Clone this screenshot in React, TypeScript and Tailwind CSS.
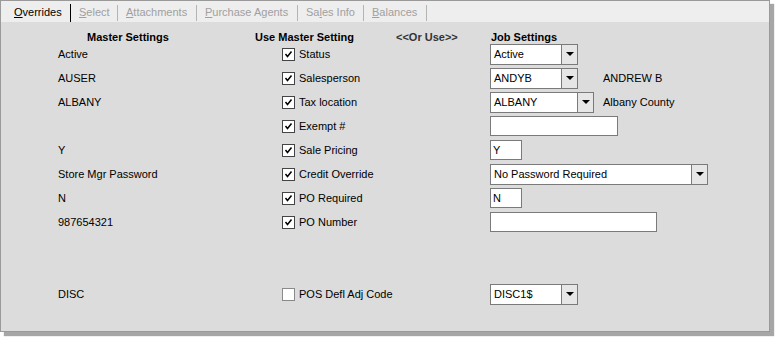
import React from "react";

const Combo: React.FC<{ value: string; width: string }> = ({value, width}) => {
    return (
        <div className={`flex h-[21px] border border-[#7a7a7a] bg-white ${width}`}>
            <div className="flex-1 pl-[3px] leading-[19px] text-black truncate">{value}</div>
            <div className="w-[16px] border-l border-[#7a7a7a] bg-[#e6e6e6] flex items-center justify-center">
                <div className="w-0 h-0 border-l-[4px] border-r-[4px] border-t-[4px] border-l-transparent border-r-transparent border-t-black"></div>
            </div>
        </div>
    );
};

const TextBox: React.FC<{ value?: string; width: string }> = ({value, width}) => {
    return (
        <div className={`h-[20px] border border-[#7a7a7a] bg-white pl-[2px] leading-[18px] text-black ${width}`}>
            {value}
        </div>
    );
};

const Check: React.FC<{ checked: boolean }> = ({checked}) => {
    return (
        <div
            className={`w-[13px] h-[13px] border bg-white flex items-center justify-center ${checked ? "border-[#444444]" : "border-[#8a8a8a]"}`}>
            {checked && (
                <svg width="9" height="9" viewBox="0 0 9 9">
                    <path d="M1.5 4 L3.5 6.5 L7.5 1.5" stroke="#000" strokeWidth="1.5" fill="none"/>
                </svg>
            )}
        </div>
    );
};

type Row = {
    master: string;
    checked: boolean;
    label: string;
    job: React.ReactNode;
    extra?: string;
};

const rows: (Row | null)[] = [
    {master: "Active", checked: true, label: "Status", job: <Combo value="Active" width="w-[88px]"/>},
    {master: "AUSER", checked: true, label: "Salesperson", job: <Combo value="ANDYB" width="w-[88px]"/>, extra: "ANDREW B"},
    {master: "ALBANY", checked: true, label: "Tax location", job: <Combo value="ALBANY" width="w-[104px]"/>, extra: "Albany County"},
    {master: "", checked: true, label: "Exempt #", job: <TextBox width="w-[128px]"/>},
    {master: "Y", checked: true, label: "Sale Pricing", job: <TextBox value="Y" width="w-[32px]"/>},
    {master: "Store Mgr Password", checked: true, label: "Credit Override", job: <Combo value="No Password Required" width="w-[218px]"/>},
    {master: "N", checked: true, label: "PO Required", job: <TextBox value="N" width="w-[32px]"/>},
    {master: "987654321", checked: true, label: "PO Number", job: <TextBox width="w-[167px]"/>},
    null,
    null,
    {master: "DISC", checked: false, label: "POS Defl Adj Code", job: <Combo value="DISC1$" width="w-[88px]"/>},
];

const tabs = [
    {pre: "", key: "O", post: "verrides", w: "w-[65px]", active: true},
    {pre: "", key: "S", post: "elect", w: "w-[47px]", active: false},
    {pre: "", key: "A", post: "ttachments", w: "w-[79px]", active: false},
    {pre: "", key: "P", post: "urchase Agents", w: "w-[101px]", active: false},
    {pre: "Sa", key: "l", post: "es Info", w: "w-[66px]", active: false},
    {pre: "", key: "B", post: "alances", w: "w-[63px]", active: false},
];

const App: React.FC = () => {
    return (
        <div className="w-[777px] h-[338px] bg-white text-[11px] text-black"
             style={{fontFamily: '"Liberation Sans", Arial, sans-serif'}}>
            <div className="w-[770px] h-[332px] border border-[#9a9a9a] shadow-[4px_4px_1px_rgba(0,0,0,0.35)] flex flex-col bg-[#dcdcdc]">
                {/* Tabs */}
                <div className="h-[21px] bg-[#eeeeee] flex pl-[5px] shrink-0">
                    {tabs.map((t) => (
                        <div key={t.post} className={`${t.w} flex items-end`}>
                            <div className={`flex-1 pl-[8px] pb-[3px] leading-[14px] ${t.active ? "text-black" : "text-[#a0a0a0]"}`}>
                                {t.pre}<span className="underline">{t.key}</span>{t.post}
                            </div>
                            <div className={`w-px ${t.active ? "h-[18px] bg-black" : "h-[16px] mb-[1px] bg-[#b4b4b4]"}`}></div>
                        </div>
                    ))}
                </div>
                {/* Content */}
                <div className="flex-1 flex flex-col">
                    <div className="h-[20px] shrink-0 flex font-bold pt-[8px] leading-[14px]">
                        <div className="w-[86px]"></div>
                        <div className="w-[168px]">Master Settings</div>
                        <div className="w-[141px]">Use Master Setting</div>
                        <div className="w-[95px] text-[#333333]">&lt;&lt;Or Use&gt;&gt;</div>
                        <div>Job Settings</div>
                    </div>
                    {rows.map((r, i) => (
                        <div key={i} className="h-[24px] shrink-0 flex items-center">
                            {r && (
                                <>
                                    <div className="w-[57px]"></div>
                                    <div className="w-[224px] leading-[14px] -mt-[1px]">{r.master}</div>
                                    <div className="w-[17px]"><Check checked={r.checked}/></div>
                                    <div className="w-[191px] leading-[14px]">{r.label}</div>
                                    <div className="w-[113px]">{r.job}</div>
                                    {r.extra && <div className="leading-[14px] -mt-[1px]">{r.extra}</div>}
                                </>
                            )}
                        </div>
                    ))}
                </div>
            </div>
        </div>
    );
};

export default App;
